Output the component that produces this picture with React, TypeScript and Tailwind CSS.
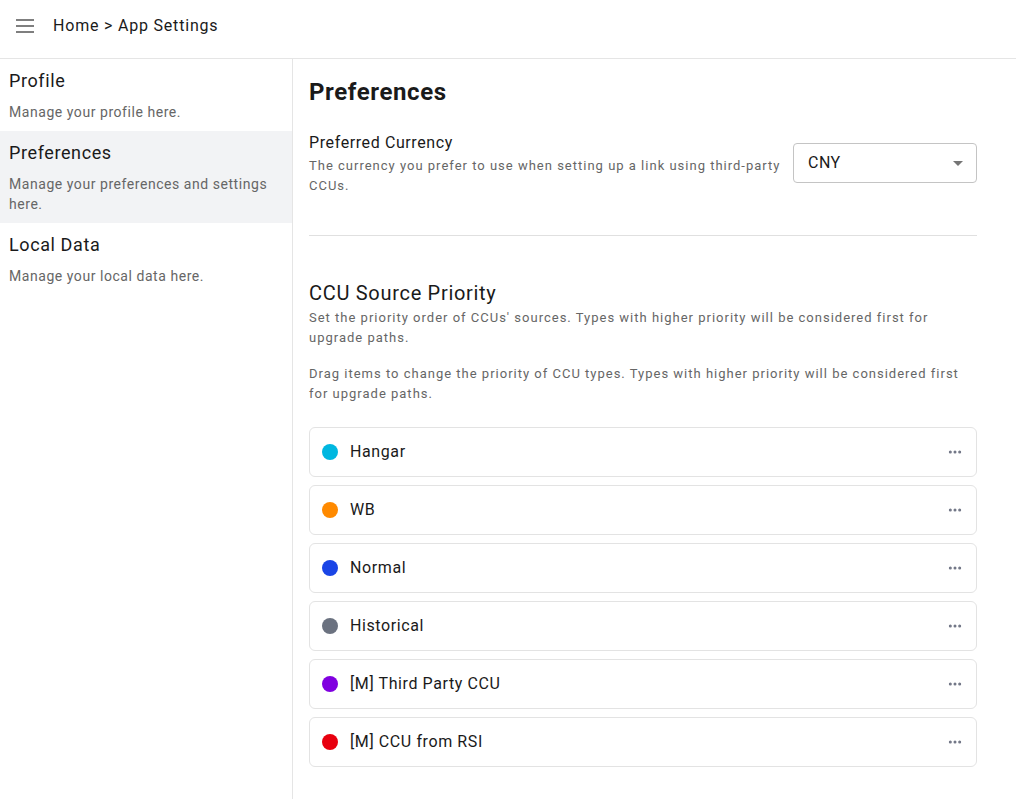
import { MoreHorizontal } from "lucide-react"

const sections = [
  { title: "Profile", desc: "Manage your profile here.", active: false },
  { title: "Preferences", desc: "Manage your preferences and settings here.", active: true },
  { title: "Local Data", desc: "Manage your local data here.", active: false },
]

const sources = [
  { name: "Hangar", color: "bg-[#00b7e0]" },
  { name: "WB", color: "bg-[#ff8a00]" },
  { name: "Normal", color: "bg-[#1a45e6]" },
  { name: "Historical", color: "bg-[#6b7280]" },
  { name: "[M] Third Party CCU", color: "bg-[#8000e0]" },
  { name: "[M] CCU from RSI", color: "bg-[#e8000f]" },
]

export default function App() {
  return (
    <div className="min-h-screen bg-white text-[#1a1a1a] font-['Roboto',sans-serif]">
      <header className="h-[59px] border-b border-[#e5e5e5] flex items-center gap-[19px] pl-4 pb-[7px]">
        <svg width="18" height="14" viewBox="0 0 18 14" className="shrink-0">
          <path d="M0 1h18M0 7h18M0 13h18" stroke="#555" strokeWidth="1.6" />
        </svg>
        <span className="text-base tracking-[0.8px]">Home &gt; App Settings</span>
      </header>

      <div className="flex min-h-[740px]">
        <aside className="w-[293px] border-r border-[#e5e5e5] shrink-0">
          {sections.map((s) => (
            <div key={s.title} className={`px-[9px] pt-[10px] pb-[9px] ${s.active ? "bg-[#f2f3f5]" : ""}`}>
              <p className="text-lg leading-[24px] tracking-[0.6px] mb-[9px]">{s.title}</p>
              <p className="text-sm leading-5 text-[#666] tracking-[0.55px]">{s.desc}</p>
            </div>
          ))}
        </aside>

        <main className="flex-1 pl-4 pr-[39px] pt-[76px] relative">
          <div className="absolute left-4 top-[17px]">
            <h1 className="text-2xl font-bold tracking-[0.6px] leading-[32px]">Preferences</h1>
          </div>

          <div className="flex items-start justify-between gap-2 pb-[39px] border-b border-[#e0e0e0]">
            <div>
              <p className="text-base leading-[20px] tracking-[0.6px] mb-[3px] mt-[-2px]">Preferred Currency</p>
              <p className="text-[13px] leading-5 text-[#666] tracking-[1px]">
                The currency you prefer to use when setting up a link using third-party CCUs.
              </p>
            </div>
            <div className="w-[184px] h-10 shrink-0 mt-[8px] border border-[#c4c4c4] rounded flex items-center justify-between pl-[14px] pr-[13px]">
              <span className="text-base tracking-[0.5px]">CNY</span>
              <svg width="10" height="5" viewBox="0 0 10 5">
                <path d="M0 0h10L5 5z" fill="#757575" />
              </svg>
            </div>
          </div>

          <h2 className="text-xl leading-7 tracking-[0.7px] mt-[43px] mb-[1px]">CCU Source Priority</h2>
          <p className="text-[13px] leading-5 text-[#666] tracking-[1px]">
            Set the priority order of CCUs' sources. Types with higher priority will be considered first for upgrade paths.
          </p>
          <p className="text-[13px] leading-5 text-[#666] tracking-[1px] mt-4">
            Drag items to change the priority of CCU types. Types with higher priority will be considered first for upgrade paths.
          </p>

          <div className="mt-[23px] flex flex-col gap-2">
            {sources.map((s) => (
              <div key={s.name} className="h-[50px] border border-[#e3e3e3] rounded-md flex items-center pl-3 pr-[13px]">
                <span className={`h-4 w-4 rounded-full ${s.color}`} />
                <span className="ml-3 text-base tracking-[0.6px]">{s.name}</span>
                <MoreHorizontal className="ml-auto h-4 w-4 text-[#707585]" strokeWidth={2.5} />
              </div>
            ))}
          </div>
        </main>
      </div>
    </div>
  )
}
